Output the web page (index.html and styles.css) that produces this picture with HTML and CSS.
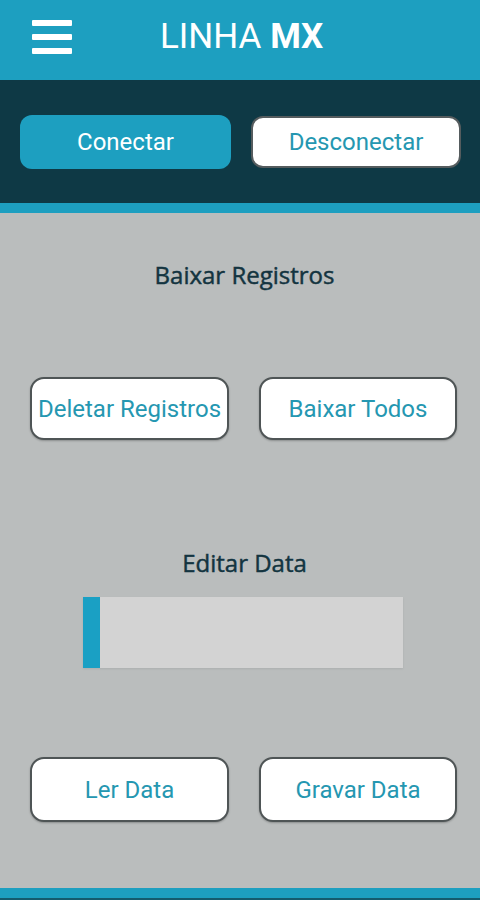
FILE: index.html
```html
<!DOCTYPE html>
<html lang="pt">
<head>
<meta charset="utf-8">
<link rel="stylesheet" href="styles.css">
</head>
<body>
<div class="app">
  <header class="topbar">
    <svg class="menu" width="40" height="34" viewBox="0 0 40 34">
      <rect x="0" y="0" width="40" height="6" rx="1" fill="#fff"/>
      <rect x="0" y="14" width="40" height="6" rx="1" fill="#fff"/>
      <rect x="0" y="28" width="40" height="6" rx="1" fill="#fff"/>
    </svg>
    <div class="title">LINHA <b>MX</b></div>
  </header>
  <section class="connbar">
    <button class="btn-primary">Conectar</button>
    <button class="btn-white">Desconectar</button>
  </section>
  <div class="strip"></div>
  <main class="content">
    <h2 class="heading h-first">Baixar Registros</h2>
    <div class="row row-first">
      <button class="btn-outline">Deletar Registros</button>
      <button class="btn-outline">Baixar Todos</button>
    </div>
    <h2 class="heading h-second">Editar Data</h2>
    <div class="field"><div class="field-fill"></div></div>
    <div class="row row-last">
      <button class="btn-outline tall">Ler Data</button>
      <button class="btn-outline tall">Gravar Data</button>
    </div>
  </main>
  <div class="bottom"></div>
</div>
</body>
</html>
```
FILE: styles.css
```css
* { box-sizing: border-box; }
html, body { margin: 0; padding: 0; }
body { width: 480px; height: 900px; overflow: hidden; font-family: Roboto, "Liberation Sans", sans-serif; }
.app { display: flex; flex-direction: column; height: 900px; background: #babdbd; }
.topbar {
  height: 80px; background: #1d9fc0; display: flex; align-items: center;
  padding-left: 32px; position: relative;
}
.menu { display: block; margin-top: -6px; }
.title {
  margin-left: 88px; color: #fff; font-size: 35px; font-weight: 400; letter-spacing: 0;
  margin-top: -7px; font-family: Roboto, "Liberation Sans", sans-serif;
}
.title b { font-weight: 700; }
.connbar {
  height: 123px; background: #0e3945; display: grid;
  grid-template-columns: 211px 210px; column-gap: 20px;
  padding: 35px 0 0 20px; align-content: start;
}
button { font-family: Roboto, "Liberation Sans", sans-serif; font-size: 24px; cursor: pointer; padding: 0; }
.btn-primary {
  height: 54px; border: none; border-radius: 12px; background: #1d9fc0; color: #fff;
}
.btn-white {
  height: 52px; margin-top: 1px; border: 2px solid #555c5e; border-radius: 12px;
  background: #fff; color: #2597b1;
}
.strip { height: 10px; background: #1d9fc0; }
.content { flex: 1; display: flex; flex-direction: column; padding-top: 42px; }
.heading {
  margin: 0; height: 40px; line-height: 40px; text-align: center;
  font-family: "Open Sans", "Noto Sans", sans-serif; font-weight: 400; font-size: 24px;
  -webkit-text-stroke: 0.45px #133440;
  color: #133440; padding-left: 9px;
}
.row {
  display: grid; grid-template-columns: 199px 198px; column-gap: 30px; padding-left: 30px;
}
.row-first { margin-top: 82px; }
.h-second { margin-top: 103px; }
.btn-outline {
  height: 63px; border: 2px solid #4f5556; border-radius: 14px; background: #fff;
  color: #2597b1; box-shadow: 0 1px 2px rgba(0,0,0,0.25);
}
.btn-outline.tall { height: 65px; }
.field {
  margin: 14px 0 0 83px; width: 320px; height: 71px; background: #d3d3d3;
  display: flex; box-shadow: 0 1px 2px rgba(0,0,0,0.08);
}
.field-fill { width: 17px; background: #1aa0c4; }
.row-last { margin-top: 89px; }
.bottom { height: 12px; background: #1d9fc0; border-bottom: 2px solid #145b6e; }
```
